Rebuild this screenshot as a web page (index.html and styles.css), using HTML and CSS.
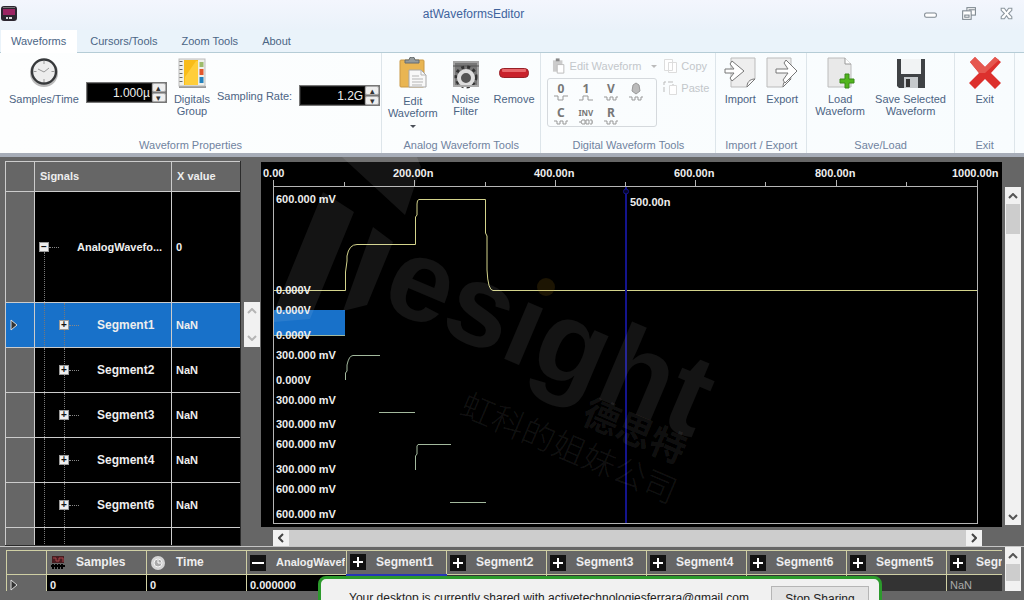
FILE: index.html
```html
<!DOCTYPE html>
<html lang="en">
<head>
<meta charset="utf-8">
<title>atWaveformsEditor</title>
<link rel="stylesheet" href="styles.css">
</head>
<body>
<header class="titlebar">
  <svg class="app-icon" viewBox="0 0 16 16"><rect width="16" height="15" rx="3" fill="#2c2630"/><rect x="2" y="3" width="12" height="6" fill="#9c2463"/><path d="M5 11h2v2H5zM8 11h3v2H8z" fill="#ddd"/><path d="M2 1.500h12" stroke="#777"/></svg>
  <h1 class="title">atWaveformsEditor</h1>
  <div class="window-controls">
    <button class="win-btn" aria-label="Minimize"><svg viewBox="0 0 16 14"><rect x="2.500" y="6.500" width="11" height="4" rx="1.500" fill="#fff" stroke="#7c868e"/></svg></button>
    <button class="win-btn" aria-label="Restore"><svg viewBox="0 0 16 14"><rect x="6.500" y="1.500" width="8" height="7" fill="#fff" stroke="#7c868e"/><path d="M8 3.500h6" stroke="#7c868e"/><rect x="2.500" y="4.500" width="8" height="8" fill="#fff" stroke="#7c868e"/><rect x="4.500" y="8.500" width="4" height="2" fill="none" stroke="#7c868e"/></svg></button>
    <button class="win-btn" aria-label="Close"><svg viewBox="0 0 16 14"><path d="M3 2h3l2 3 2-3h3v2l-3 3 3 3v2h-3l-2-3-2 3H3v-2l3-3-3-3z" fill="#fff" stroke="#8c969e"/></svg></button>
  </div>
</header>
<nav class="tabs">
  <button class="tab tab-active">Waveforms</button>
  <button class="tab">Cursors/Tools</button>
  <button class="tab">Zoom Tools</button>
  <button class="tab">About</button>
</nav>
<section class="ribbon">
  <div class="group group-properties">
    <div class="tools">
      <button class="tool"><svg viewBox="0 0 32 32"><circle cx="16" cy="16" r="14" fill="#bbb"/><circle cx="16" cy="14.500" r="12" fill="#ededed" stroke="#37393b" stroke-width="2.400"/><path d="M10 12l6 3 5-4M16 4v3M16 22v3M5.500 14.500h3M23.500 14.500h3" fill="none" stroke="#999"/></svg><span>Samples/Time</span></button>
      <div class="spin spin-samples"><input class="spin-value" value="1.000µ" aria-label="Samples/Time"><div class="spin-keys"><button aria-label="Increase time">▴</button><button aria-label="Decrease time">▾</button></div></div>
      <button class="tool"><svg viewBox="0 0 32 32"><path d="M3 30h27" stroke="#999" stroke-width="2"/><rect x="3" y="2" width="26" height="27" fill="#eeefe9" stroke="#bbb"/><rect x="8" y="3" width="14" height="25" fill="#f9bc18"/><path d="M9 20L20 4h2v24H9z" fill="#ffce3a"/><path d="M23.500 5h4v5h-4z" fill="#9dbb6a"/><path d="M23.500 12h4v6h-4z" fill="#e4572b"/><path d="M23.500 20h4v6h-4z" fill="#2582bd"/><path d="M5 4v24" stroke="#666" stroke-width="3" stroke-dasharray="1 3"/></svg><span>Digitals<br>Group</span></button>
      <label class="rate-label" for="rate">Sampling Rate:</label>
      <div class="spin spin-rate"><input class="spin-value" id="rate" value="1.2G"><div class="spin-keys"><button aria-label="Increase rate">▴</button><button aria-label="Decrease rate">▾</button></div></div>
    </div>
    <h2 class="group-name">Waveform Properties</h2>
  </div>
  <div class="group group-analog">
    <div class="tools">
      <button class="tool tool-menu"><svg viewBox="0 0 32 32"><rect x="3" y="3" width="24" height="27" rx="1" fill="#e9b552" stroke="#c99845"/><path d="M8 6V3h4q0-3 3-3t3 3h4v3z" fill="#949a9b" stroke="#676d70"/><path d="M12 13h12l5 5v12H12z" fill="#f8f8f8" stroke="#a8a8a8"/><path d="M24 13v5h5M15 19h7M15 22h11M15 25h11M15 28h10" fill="none" stroke="#b5b5b5"/></svg><span>Edit<br>Waveform</span><span class="menu-arrow"></span></button>
      <button class="tool"><svg viewBox="0 0 32 32"><rect x="3" y="4" width="26" height="25" fill="#777"/><path d="M3 5h26M4 4v25M28 4v25" stroke="#a2a2a2" stroke-width="2"/><path d="M3 9h26" stroke="#555"/><circle cx="16" cy="20" r="10" fill="none" stroke="#333" stroke-width="3" stroke-dasharray="3 3"/><circle cx="16" cy="21" r="7" fill="#555" stroke="#ddd" stroke-width="4"/><circle cx="16" cy="21" r="3" fill="#555"/><path d="M3 29h26" stroke="#aaa" stroke-width="2"/></svg><span>Noise<br>Filter</span></button>
      <button class="tool"><svg viewBox="0 0 32 32"><rect x="1.500" y="11.500" width="29" height="9" rx="4" fill="#c9212b" stroke="#972027"/><rect x="4" y="12" width="24" height="3" rx="1" fill="#e8666a"/></svg><span>Remove</span></button>
    </div>
    <h2 class="group-name">Analog Waveform Tools</h2>
  </div>
  <div class="group group-digital">
    <div class="digital-tools">
      <button class="small-tool" disabled><svg viewBox="0 0 14 16"><path d="M1 2h10v12H1z" fill="#ccc"/><path d="M4 0h4v3H4z" fill="#888"/><path d="M5.500 6.500h7v9h-7z" fill="#fff" stroke="#bbb"/></svg>Edit Waveform<span class="menu-arrow menu-arrow-faint"></span></button>
      <button class="small-tool" disabled><svg viewBox="0 0 14 16"><path d="M1.500 1.500h8v11h-8zM5.500 4.500h8v10h-8z" fill="#fff" stroke="#ddd"/></svg>Copy</button>
      <div class="patterns">
        <button aria-label="Set low" disabled><b>0</b><svg viewBox="0 0 14 6"><path d="M0 1h4v4h5V1h5"/></svg></button>
        <button aria-label="Set high" disabled><b>1</b><svg viewBox="0 0 14 6"><path d="M0 5h4V1h5v4h5"/></svg></button>
        <button aria-label="Value" disabled><b>V</b><svg viewBox="0 0 14 6"><path d="M0 2h3v3h3V2h3v3h3V2h2"/></svg></button>
        <button aria-label="Random" disabled><svg class="dice" viewBox="0 0 14 13"><path d="M4 3l3-2 3 2 1 6-4 3-4-3z"/></svg><svg viewBox="0 0 14 6"><path d="M0 2h3v3h3V2h3v3h3V2h2"/></svg></button>
        <button aria-label="Clock" disabled><b>C</b><svg viewBox="0 0 14 6"><path d="M0 2h3v3h3V2h3v3h3V2h2"/></svg></button>
        <button aria-label="Invert" disabled><b class="inv">INV</b><svg viewBox="0 0 14 6"><path d="M0 3h2l1-2h3v4H3L2 3M7 1h3v4H7zM11 1h2v4h-2M13 3h1"/></svg></button>
        <button aria-label="Repeat" disabled><b>R</b><svg viewBox="0 0 14 6"><path d="M0 2h3v3h3V2h3v3h3V2h2"/></svg></button>
      </div>
      <button class="small-tool" disabled><svg viewBox="0 0 14 16"><path d="M1 12V2h9v3" fill="none" stroke="#bbb" stroke-dasharray="5 2"/><path d="M6.500 5.500h7v9h-7z" fill="#fff" stroke="#ddd"/></svg>Paste</button>
    </div>
    <h2 class="group-name">Digital Waveform Tools</h2>
  </div>
  <div class="group group-transfer">
    <div class="tools">
      <button class="tool"><svg viewBox="0 0 32 32"><path d="M7 1h24v21l-8 8H7z" fill="#eee" stroke="#bbb"/><path d="M23 30c0-4 2-8 8-8z" fill="#fafafa" stroke="#777"/><path d="M1 12h9l-4-5 2-3 12 10L8 24l-2-3 4-5H1z" fill="#fff" stroke="#777"/></svg><span>Import</span></button>
      <button class="tool"><svg viewBox="0 0 32 32"><path d="M1 1h24v21l-8 8H1z" fill="#eee" stroke="#bbb"/><path d="M17 30c0-4 2-8 8-8z" fill="#fafafa" stroke="#777"/><path d="M10 12h12l-4-6 2-3 11 11-12 12-2-3 5-7H10z" fill="#fff" stroke="#777"/></svg><span>Export</span></button>
    </div>
    <h2 class="group-name">Import / Export</h2>
  </div>
  <div class="group group-files">
    <div class="tools">
      <button class="tool"><svg viewBox="0 0 32 32"><path d="M4 1h17l6 6v23H4z" fill="#e9e9e9" stroke="#bcbcbc"/><path d="M21 1v6h6" fill="#fff" stroke="#999"/><path d="M21 17h4v5h5v4h-5v5h-4v-5h-5v-4h5z" fill="#51b51d" stroke="#3b891a"/></svg><span>Load<br>Waveform</span></button>
      <button class="tool"><svg viewBox="0 0 32 32"><path d="M2 2h28v29H4l-2-2z" fill="#3f4245"/><rect x="6" y="2" width="20" height="15" fill="#f1f3f4"/><rect x="9" y="20" width="14" height="11" fill="#c5c9cc"/><rect x="11" y="22" width="4" height="8" fill="#333"/></svg><span>Save Selected<br>Waveform</span></button>
    </div>
    <h2 class="group-name">Save/Load</h2>
  </div>
  <div class="group group-exit">
    <div class="tools">
      <button class="tool"><svg viewBox="0 0 32 32"><path d="M1 5l5-5 10 10L26 0l6 5-10 11 10 10-6 6-10-10L6 32l-6-6 10-10z" fill="#dc302d"/><path d="M1 5l5-5 10 10L26 0l4 3-14 13-6 0z" fill="#e5574f"/></svg><span>Exit</span></button>
    </div>
    <h2 class="group-name">Exit</h2>
  </div>
</section>
<main class="workspace">
  <div class="upper">
    <div class="signals-pane">
      <table class="signals">
        <colgroup><col class="col-mark"><col class="col-name"><col class="col-x"></colgroup>
        <thead><tr><th></th><th>Signals</th><th>X value</th></tr></thead>
        <tbody>
          <tr class="row-root"><td></td><td><div class="node"><button class="box" aria-label="Collapse">−</button><span class="node-name">AnalogWavefo...</span></div></td><td>0</td></tr>
          <tr class="row-selected"><td><svg class="marker" viewBox="0 0 8 12"><path d="M1 1l6 5-6 5z"/></svg></td><td><div class="node child"><button class="box" aria-label="Expand">+</button><span class="node-name">Segment1</span></div></td><td>NaN</td></tr>
          <tr><td></td><td><div class="node child"><button class="box" aria-label="Expand">+</button><span class="node-name">Segment2</span></div></td><td>NaN</td></tr>
          <tr><td></td><td><div class="node child"><button class="box" aria-label="Expand">+</button><span class="node-name">Segment3</span></div></td><td>NaN</td></tr>
          <tr><td></td><td><div class="node child"><button class="box" aria-label="Expand">+</button><span class="node-name">Segment4</span></div></td><td>NaN</td></tr>
          <tr><td></td><td><div class="node child"><button class="box" aria-label="Expand">+</button><span class="node-name">Segment6</span></div></td><td>NaN</td></tr>
          <tr><td></td><td><div class="node child"></div></td><td></td></tr>
        </tbody>
      </table>
    </div>
    <div class="row-scroll">
      <div class="row-scroll-bar"><svg viewBox="0 0 10 6"><path d="M1 5l4-4 4 4"/></svg><svg viewBox="0 0 10 6"><path d="M1 1l4 4 4-4"/></svg></div>
    </div>
    <div class="plot-pane">
      <svg class="plot" viewBox="261 162 741 365">
        <rect class="select" x="274" y="310" width="71" height="26"/>
        <path class="axis" d="M274 186.500H978M273.500 180V523M977.500 180V523M273 523.500H978M344.500 182v4M414.500 180v6M485.500 182v4M555.500 180v6M625.500 182v4M695.500 180v6M765.500 182v4M836.500 180v6M906.500 182v4"/>
        <path class="trace" d="M274 290.500H345.500V272L347 261V256Q349 244.500 357 244.500H415.500V217L417 215V204Q417 199.500 419 199.500H485.500V233L487 236V270Q488 290.500 493 290.500H977"/>
        <path class="segment" d="M274 335.500H345M345.500 380V373L347 371V365Q349 355.500 353 355.500H380M379 412.500H415M415.500 470V456L417 454V446L418 444.500H451M450 502.500H486"/>
        <rect class="cursor" x="625" y="187" width="2" height="336"/>
        <circle class="cursor-grip" cx="626" cy="191.500" r="2.500"/>
        <g class="plot-text">
          <text x="263" y="177">0.00</text><text x="393" y="177">200.00n</text><text x="534" y="177">400.00n</text><text x="674" y="177">600.00n</text><text x="815" y="177">800.00n</text><text x="952" y="177">1000.00n</text>
          <text x="630" y="206">500.00n</text>
          <text x="276" y="203">600.000 mV</text><text x="276" y="294">0.000V</text>
          <text x="276" y="314">0.000V</text><text x="276" y="339">0.000V</text>
          <text x="276" y="359">300.000 mV</text><text x="276" y="384">0.000V</text>
          <text x="276" y="404">300.000 mV</text><text x="276" y="428">300.000 mV</text>
          <text x="276" y="448">600.000 mV</text><text x="276" y="473">300.000 mV</text>
          <text x="276" y="493">600.000 mV</text><text x="276" y="518">600.000 mV</text>
        </g>
      </svg>
      <div class="hscroll"><button aria-label="Scroll left"><svg viewBox="0 0 6 10"><path d="M5 1L1 5l4 4"/></svg></button><button aria-label="Scroll right"><svg viewBox="0 0 6 10"><path d="M1 1l4 4-4 4"/></svg></button></div>
    </div>
    <div class="vscroll vscroll-plot"><button aria-label="Scroll up"><svg viewBox="0 0 10 6"><path d="M1 5l4-4 4 4"/></svg></button><div class="thumb"></div><button class="down" aria-label="Scroll down"><svg viewBox="0 0 10 6"><path d="M1 1l4 4 4-4"/></svg></button></div>
  </div>
  <div class="lower">
    <div class="values-pane">
      <table class="values">
        <colgroup><col class="col-row"><col><col><col><col><col><col><col><col><col><col></colgroup>
        <thead><tr>
          <th></th>
          <th><div class="head"><svg viewBox="0 0 16 16"><path d="M2 1h12v7H2z" fill="#471c20"/><path d="M3 3h3v3h3V3h4v4" fill="none" stroke="#a7444b"/><path d="M1 11h14M3 9v5M6 9v5M9 9v5M12 9v5" stroke="#000" stroke-width="2"/></svg>Samples</div></th>
          <th><div class="head"><svg viewBox="0 0 16 16"><circle cx="8" cy="8" r="7" fill="#d5d5d5"/><circle cx="8" cy="8" r="4" fill="#aaa" stroke="#f5f5f5"/><path d="M8 5v3h3" fill="none" stroke="#fff"/></svg>Time</div></th>
          <th><div class="head"><svg viewBox="0 0 16 16"><path class="key" d="M0 0h16v16H0z"/><path class="sign" d="M2 8h12"/></svg><span class="clip">AnalogWaveform</span></div></th>
          <th class="current"><div class="head"><svg viewBox="0 0 16 16"><path class="key" d="M0 0h16v16H0z"/><path class="sign" d="M3 8h10M8 3v10"/></svg>Segment1</div></th>
          <th><div class="head"><svg viewBox="0 0 16 16"><path class="key" d="M0 0h16v16H0z"/><path class="sign" d="M3 8h10M8 3v10"/></svg>Segment2</div></th>
          <th><div class="head"><svg viewBox="0 0 16 16"><path class="key" d="M0 0h16v16H0z"/><path class="sign" d="M3 8h10M8 3v10"/></svg>Segment3</div></th>
          <th><div class="head"><svg viewBox="0 0 16 16"><path class="key" d="M0 0h16v16H0z"/><path class="sign" d="M3 8h10M8 3v10"/></svg>Segment4</div></th>
          <th><div class="head"><svg viewBox="0 0 16 16"><path class="key" d="M0 0h16v16H0z"/><path class="sign" d="M3 8h10M8 3v10"/></svg>Segment6</div></th>
          <th><div class="head"><svg viewBox="0 0 16 16"><path class="key" d="M0 0h16v16H0z"/><path class="sign" d="M3 8h10M8 3v10"/></svg>Segment5</div></th>
          <th><div class="head"><svg viewBox="0 0 16 16"><path class="key" d="M0 0h16v16H0z"/><path class="sign" d="M3 8h10M8 3v10"/></svg>Segment7</div></th>
        </tr></thead>
        <tbody><tr><td><svg class="marker" viewBox="0 0 8 12"><path d="M1 1l6 5-6 5z"/></svg></td><td>0</td><td>0</td><td>0.000000</td><td class="off"></td><td class="off"></td><td class="off"></td><td class="off"></td><td class="off"></td><td class="off"></td><td class="off">NaN</td></tr></tbody>
      </table>
    </div>
    <div class="vscroll"><button aria-label="Rows up"><svg viewBox="0 0 10 6"><path d="M1 5l4-4 4 4"/></svg></button><div class="thumb thumb-short"></div></div>
  </div>
</main>
<svg class="brand" viewBox="0 0 1024 600" aria-hidden="true">
  <path d="M342 157H417L421 167L405 215ZM323 192L354 212L310 319L274 322V312ZM373 227L393 242L367 305L343 311Z"/>
  <circle class="brand-dot" cx="546" cy="287" r="9"/>
  <g transform="translate(378 305) rotate(23)"><text class="brand-word" x="0" y="0">esıght</text></g>
  <g transform="translate(580 422) rotate(23)"><text class="brand-name">德思特</text></g>
  <g transform="translate(458 414) rotate(23)"><text class="brand-line">虹科的姐妹公司</text></g>
</svg>
<aside class="share"><span class="share-text">Your desktop is currently shared with activetechnologiesferrara@gmail.com</span><button class="share-stop">Stop Sharing</button></aside>
</body>
</html>
```
FILE: styles.css
```css
* { box-sizing: border-box; }
body {
  margin: 0;
  height: 100vh;
  display: flex;
  flex-direction: column;
  overflow: hidden;
  position: relative;
  background: #eaf2fa;
  color: #4c6484;
  font: 11px/12px "Liberation Sans", Arial, sans-serif;
}
button { font: inherit; color: inherit; border: 0; padding: 0; background: none; }
h1, h2 { margin: 0; font-size: 11px; font-weight: 400; }

.titlebar {
  display: flex;
  align-items: center;
  gap: 12px;
  height: 30px;
  flex: none;
  padding: 0 9px 3px 1px;
  background: linear-gradient(#f3f6fd, #eaf2fa);
}
.app-icon { width: 16px; height: 16px; flex: none; }
.title { flex: 1; text-align: center; color: #40639c; font-size: 12px; line-height: 14px; padding-left: 8px; }
.window-controls { display: flex; gap: 21px; }
.win-btn svg { display: block; width: 17px; height: 15px; }

.tabs {
  display: flex;
  gap: 3px;
  height: 23px;
  flex: none;
  padding: 0 1px;
  border-bottom: 1px solid #b5ccd6;
  background: #eaf3fa;
}
.tab { padding: 0 11px 2px 10px; height: 23px; color: #4b6585; }
.tab-active { background: #fff; }

.ribbon {
  display: flex;
  flex: none;
  height: 104px;
  padding-right: 9px;
  background: linear-gradient(90deg, #fdfefe, #f8fcfe);
  border-bottom: 4px solid #a7adb8;
}
.group {
  display: flex;
  flex-direction: column;
  justify-content: space-between;
  border-right: 1px solid #dde5ea;
  min-width: 0;
}
.group-properties { flex: 383 1 0; }
.group-analog { flex: 159 1 0; }
.group-digital { flex: 175 1 0; }
.group-transfer { flex: 90 1 0; }
.group-files { flex: 148 1 0; }
.group-exit { flex: 59 1 0; }
.group-name { height: 14px; text-align: center; color: #7083a0; white-space: nowrap; }
.tools { display: flex; justify-content: center; padding-top: 4px; white-space: nowrap; }
.group-properties .tools { justify-content: flex-start; gap: 7px; padding-left: 9px; }
.group-analog .tools { gap: 12px; }
.group-transfer .tools, .group-files .tools { gap: 10px; }
.tool { display: flex; flex-direction: column; align-items: center; justify-content: flex-start; gap: 4px; }
.tool svg { width: 32px; height: 32px; }
.tool-menu { gap: 6px; }
.menu-arrow { border: 3px solid transparent; border-top-color: #4a4f58; }
.menu-arrow-faint { border-top-color: #bbb; margin: 3px 0 0 6px; }
.rate-label { padding-top: 33px; }

.spin { display: flex; width: 81px; height: 21px; padding: 1px; background: #777; margin-top: 25px; }
.spin-rate { margin-top: 28px; }
.spin-value {
  flex: 1;
  min-width: 0;
  padding: 0 1px;
  border: 1px solid #222;
  background: #000;
  color: #eee;
  font: 12px "Liberation Sans", Arial, sans-serif;
  text-align: right;
}
.spin-keys { display: flex; flex-direction: column; gap: 1px; width: 14px; }
.spin-keys button { flex: 1; background: #eee; border: 1px solid #aaa; border-radius: 2px; color: #333; font-size: 9px; line-height: 6px; }

.digital-tools {
  display: grid;
  grid-template-columns: 110px auto;
  grid-template-rows: 20px auto;
  gap: 2px 6px;
  align-items: start;
  padding: 3px 5px 0 6px;
}
.small-tool { display: flex; align-items: center; gap: 4px; height: 20px; color: #c3c7cb; white-space: nowrap; }
.small-tool:first-child { padding-left: 5px; }
.small-tool svg { width: 14px; height: 16px; }
.patterns {
  display: grid;
  grid-template-columns: repeat(4, 25px);
  grid-auto-rows: 24px;
  height: 49px;
  border: 1px solid #d5d9dd;
  border-radius: 3px;
}
.patterns button { display: flex; flex-direction: column; align-items: center; padding-top: 3px; color: #777; }
.patterns b { font: bold 12px/13px "Noto Sans", sans-serif; }
.patterns .inv { font-size: 8px; }
.patterns svg { flex: none; width: 14px; height: 6px; fill: none; stroke: #999; }
.patterns .dice { height: 13px; fill: #bbb; }

.workspace { flex: 1; min-height: 0; display: flex; flex-direction: column; background: #666; font: bold 11px/13px "Liberation Sans", Arial, sans-serif; color: #eee; }
.upper { display: flex; height: 390px; flex: none; padding: 4px 3px 0 5px; border-bottom: 1px solid #c5c5c5; }
.signals-pane { width: 236px; flex: none; overflow: hidden; border: solid #2c2c2c; border-width: 0 1px 1px 0; background: #000; }
table { border-collapse: collapse; table-layout: fixed; }
th, td { font-weight: bold; text-align: left; padding: 0; }
.signals { width: 235px; }
.signals th, .signals td { border: 1px solid #ccc; padding: 0 4px; }
.signals th { height: 30px; background: #666; padding: 0 5px; }
.signals td { height: 45px; background: #000; }
.signals td:first-child { background: #666; }
.signals td:nth-child(2) { padding: 0; }
.signals .row-root td { height: 111px; }
.signals .row-selected td { background: #1871c9; }
.col-mark { width: 29px; }
.col-name { width: 137px; }
.col-x { width: 69px; }
.marker { display: block; width: 8px; height: 12px; fill: #333; stroke: #ddd; }
.node { display: flex; align-items: center; height: 100%; min-height: 44px; padding-left: 4px; position: relative; }
.row-root .node { height: 110px; }
.box { display: grid; place-items: center; width: 10px; height: 10px; background: #eee; border: 1px solid #999; color: #111; font: bold 10px/8px "Liberation Sans", Arial, sans-serif; }
.node::before, .child::after { content: ""; position: absolute; top: 0; bottom: 0; left: 9px; border-left: 1px dotted #777; }
.row-root .node::before { top: 60px; }
.child { padding-left: 24px; }
.child::after { left: 29px; }
.box { z-index: 1; }
.node-name { display: flex; align-items: center; gap: 18px; }
.node-name::before { content: ""; width: 10px; border-top: 1px dotted #888; }
.child .node-name { font-size: 12px; }

.row-scroll { width: 20px; flex: none; padding: 141px 0 0 3px; }
.row-scroll-bar { display: flex; flex-direction: column; justify-content: space-between; align-items: center; width: 16px; height: 45px; padding: 6px 0; background: #f1f1f1; }
.row-scroll-bar svg, .vscroll svg { display: block; width: 10px; height: 6px; fill: none; stroke: #555; stroke-width: 2; }
.row-scroll-bar svg { stroke: #b5b5b5; }
.plot-pane { flex: 1; min-width: 0; padding-top: 1px; }
.plot { display: block; width: 100%; background: #000; }
.plot path { fill: none; }
.plot .axis { stroke: #b5b5b5; }
.plot .trace { stroke: #d3d38b; }
.plot .segment { stroke: #a3b99d; }
.plot .cursor { fill: #14148c; }
.plot .cursor-grip { fill: #05052c; stroke: #14148c; }
.plot .select { fill: #1871c9; }
.plot-text { fill: #eee; font: bold 11px "Liberation Sans", Arial, sans-serif; }
.hscroll { display: flex; justify-content: space-between; height: 16px; margin: 3px 20px 0 12px; background: #cdcdcd; }
.hscroll button { display: grid; place-items: center; width: 16px; background: #f1f1f1; }
.hscroll svg { width: 6px; height: 10px; fill: none; stroke: #444; stroke-width: 2; }
.vscroll { display: flex; flex-direction: column; flex: none; width: 16px; margin-left: 3px; background: #f1f1f1; }
.vscroll-plot { height: 338px; margin-top: 26px; }
.vscroll button { display: grid; place-items: center; height: 17px; flex: none; }
.thumb { height: 30px; margin: 0 1px; background: #cdcdcd; }
.thumb-short { height: 17px; }
.down { margin-top: auto; }

.lower { display: flex; height: 44px; padding: 0 3px 0 6px; }
.values-pane { flex: 1; min-width: 0; overflow: hidden; padding-top: 3px; }
.values { width: 1040px; }
.values col { width: 100px; }
.values .col-row { width: 40px; }
.values th { height: 24px; border: 1px solid #cfcfa4; background: #666; font-size: 12px; }
.values td { height: 18px; border: 1px solid #cfcfa4; border-bottom: 0; background: #000; padding: 2px 3px 0; line-height: 12px; }
.values td:first-child { background: #666; }
.values .current { border-bottom: 2px solid #2637b5; }
.values .off { background: #333; color: #aaa; font-weight: 400; }
.head { display: flex; align-items: center; gap: 10px; padding-left: 3px; overflow: hidden; white-space: nowrap; }
.head svg { width: 16px; height: 16px; flex: none; }
.head .clip { font-size: 11px; overflow: hidden; margin-right: 1px; }
.key { fill: #111; }
.sign { stroke: #fff; stroke-width: 2; }

.brand { position: absolute; inset: 0; width: 100%; pointer-events: none; fill: #fff; fill-opacity: 0.08; }
.brand-word { font: bold 116px "Liberation Sans", Arial, sans-serif; }
.brand-name { font: bold 36px "Noto Sans CJK SC", sans-serif; }
.brand-line { font: 300 33px "Noto Sans CJK SC", sans-serif; }
.brand-dot { fill: #c59016; fill-opacity: 0.15; }

.share {
  position: absolute;
  left: 318px;
  right: 142px;
  top: 576px;
  height: 40px;
  display: flex;
  justify-content: space-between;
  align-items: flex-start;
  padding: 7px 10px 0 28px;
  border: 3px solid #2c9a2c;
  border-radius: 8px;
  background: #f1f1f1;
  color: #222;
  font: 12px/13px "Liberation Sans", Arial, sans-serif;
}
.share-text { padding-top: 6px; white-space: nowrap; }
.share-stop { width: 98px; height: 26px; border: 1px solid #b5b5b5; background: #e3e3e3; }
```
